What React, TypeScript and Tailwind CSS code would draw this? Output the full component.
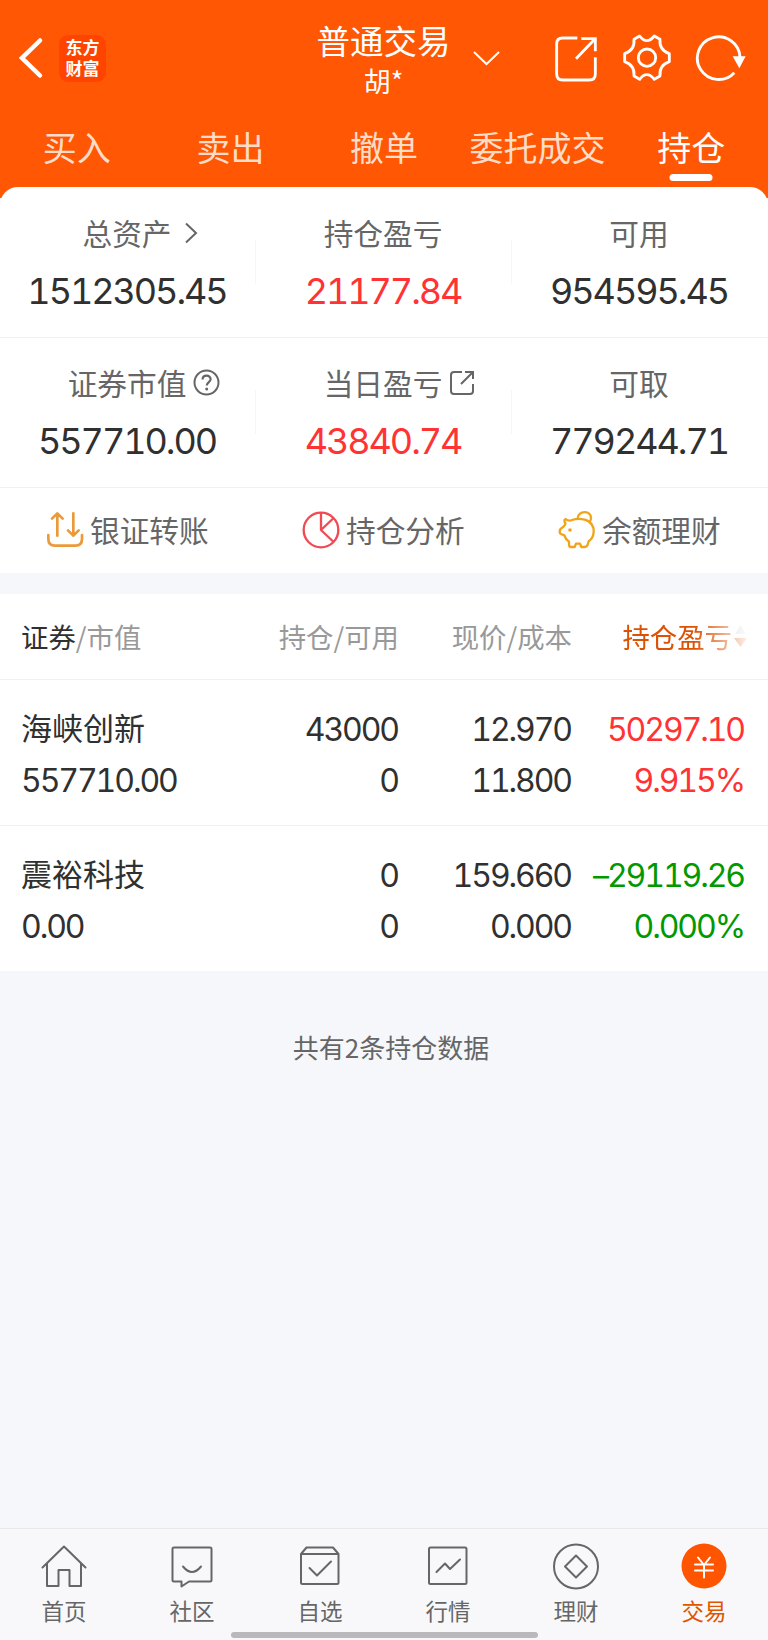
import React from 'react';
import clsx from 'clsx';

interface Holding {
  name: string;
  value: string;
  amount: string;
  available: string;
  price: string;
  cost: string;
  profit: string;
  percent: string;
  up: boolean;
}

const TABS = ['买入', '卖出', '撤单', '委托成交', '持仓'];

const HOLDINGS: Holding[] = [
  {
    name: '海峡创新',
    value: '557710.00',
    amount: '43000',
    available: '0',
    price: '12.970',
    cost: '11.800',
    profit: '50297.10',
    percent: '9.915%',
    up: true,
  },
  {
    name: '震裕科技',
    value: '0.00',
    amount: '0',
    available: '0',
    price: '159.660',
    cost: '0.000',
    profit: '–29119.26',
    percent: '0.000%',
    up: false,
  },
];

const Header: React.FC = () => (
  <header className="flex h-[112px] text-white">
    <div className="flex w-[300px] items-center pl-[18px] pt-[4px]">
      <svg width="26" height="42" viewBox="0 0 26 42" fill="none" stroke="currentColor" strokeWidth="4.500">
        <path d="M22 3.500L4 21l18 17.500" strokeLinecap="round" strokeLinejoin="miter" />
      </svg>
      <div className="ml-[15px] flex h-[47px] w-[47px] flex-col items-center justify-center rounded-[9px] bg-[#ff4400] pb-[2px] text-[17px] font-bold leading-[21px]">
        <span>东方</span>
        <span>财富</span>
      </div>
    </div>
    <div className="flex w-[168px] flex-col items-center pr-px pt-[19px]">
      <div className="text-[33.500px] leading-[42px]">普通交易</div>
      <div className="text-[27px] leading-[40px]">胡*</div>
    </div>
    <div className="flex flex-1 items-center pt-[4px]">
      <svg className="ml-[5px]" width="27" height="16" viewBox="0 0 27 16" fill="none" stroke="currentColor" strokeWidth="2">
        <path d="M1 2l12.500 12L26 2" />
      </svg>
      <svg className="ml-[54px]" width="44" height="48" viewBox="0 0 132 144" fill="none" stroke="currentColor" strokeWidth="8.500">
        <path d="M70 12H26Q8 12 8 30V120Q8 138 26 138H106Q124 138 124 120V70" />
        <path d="M82 14H124V52M122 16L66 74" />
      </svg>
      <svg className="ml-[25px]" width="48" height="48" viewBox="0 0 144 144" fill="none" stroke="currentColor" strokeWidth="8.500" strokeLinejoin="round">
        <path d="M50 6Q71 34 94 6L111 16Q108 48 139 59V83Q108 94 111 126L94 136Q71 108 50 136L33 126Q36 94 5 83V59Q36 48 33 16Z" />
        <circle cx="72" cy="71" r="26" />
      </svg>
      <svg className="ml-[24px]" width="52" height="48" viewBox="0 0 156 144" fill="none" stroke="currentColor" strokeWidth="8.500">
        <path d="M118 116A64 64 0 1 1 135 70" />
        <path d="M113 67H152L133 103Z" fill="currentColor" stroke="none" />
      </svg>
    </div>
  </header>
);

interface StatProps {
  label: string;
  value: string;
  red?: boolean;
  icon?: React.ReactNode;
  divider?: boolean;
}

const Stat: React.FC<StatProps> = ({ label, value, red, icon, divider }) => (
  <div className="relative flex flex-col items-center pr-[2px] pt-[26px]">
    <div className="relative flex h-[40px] items-center text-[29.700px] leading-[40px] text-[#666]">
      {label}
      {icon}
    </div>
    <div
      className={clsx(
        "mt-[18px] font-['Inter'] text-[36px] leading-[40px] font-[425] tracking-[-2.050px] tabular-nums",
        red ? 'text-[#ff3333]' : 'text-[#303030]'
      )}
    >
      {value}
    </div>
    {divider && <div className="absolute right-0 top-[53px] h-[44px] w-px bg-[#f6f6f7]" />}
  </div>
);

const Summary: React.FC = () => (
  <>
    <div className="grid h-[151px] grid-cols-3 border-b border-[#f0f0f0]">
      <Stat
        label="总资产"
        value="1512305.45"
        divider
        icon={
          <svg className="absolute left-[103px] top-[9px]" width="13" height="22" viewBox="0 0 13 22" fill="none" stroke="#666" strokeWidth="2">
            <path d="M1 1.500L11 11 1 20.500" />
          </svg>
        }
      />
      <Stat label="持仓盈亏" value="21177.84" red divider />
      <Stat label="可用" value="954595.45" />
    </div>
    <div className="-mt-px grid h-[151px] grid-cols-3 border-b border-[#f0f0f0]">
      <Stat
        label="证券市值"
        value="557710.00"
        divider
        icon={
          <svg className="absolute left-[125px] top-[6px]" width="27" height="27" viewBox="0 0 27 27" fill="none" stroke="#666" strokeWidth="2">
            <circle cx="13.500" cy="13.500" r="12" />
            <path d="M9.600 10.500C9.600 5.500 17.600 5.500 17.600 10.200C17.600 13 13.700 13.200 13.700 16.600" strokeWidth="2.200" />
            <circle cx="13.700" cy="20" r="1.500" fill="#666" stroke="none" />
          </svg>
        }
      />
      <Stat
        label="当日盈亏"
        value="43840.74"
        red
        divider
        icon={
          <svg className="absolute left-[125px] top-[7px]" width="26" height="26" viewBox="0 0 26 26" fill="none" stroke="#666" strokeWidth="2">
            <path d="M13 2H5Q2 2 2 5V21Q2 24 5 24H21Q24 24 24 21V14" />
            <path d="M16 2H24V9M23.500 2.500L12 14" />
          </svg>
        }
      />
      <Stat label="可取" value="779244.71" />
    </div>
  </>
);

const Actions: React.FC = () => (
  <div className="grid h-[85px] grid-cols-3 pb-[2px] text-[29.700px] text-[#666]">
    <div className="flex items-center pl-[46px]">
      <svg width="38" height="38" viewBox="0 0 114 114" fill="none" stroke="#eb9a3a" strokeWidth="8" strokeLinecap="round" strokeLinejoin="round">
        <path d="M7 72V84Q7 104 27 104H88Q108 104 108 84V72" />
        <path d="M34 74V8M18 23L34 7L50 23M82 7V74M66 58L82 74L98 58" />
      </svg>
      <span className="ml-[6px] pt-px">银证转账</span>
    </div>
    <div className="flex items-center pl-[46px]">
      <svg width="38" height="38" viewBox="0 0 114 114" fill="none" stroke="#f04a55" strokeWidth="7">
        <circle cx="57" cy="57" r="52" />
        <path d="M57 5V57L95 21M57 57L95 93" strokeLinejoin="round" />
      </svg>
      <span className="ml-[6px] pt-px">持仓分析</span>
    </div>
    <div className="flex items-center pl-[46px]">
      <svg width="38" height="38" viewBox="0 0 114 114" fill="none" stroke="#efa419" strokeWidth="7" strokeLinejoin="round">
        <path d="M23 24Q32 32 42 27Q60 21 80 26C99 31 109 47 107 64Q105 82 92 91L89 101Q86 108 78 108H70L66 98H54L50 108H39Q34 108 33 102V92Q22 84 19 73L9 69Q5 67 5 62Q5 54 12 50Q19 46 21 41Q24 38 20 33Q18 27 23 24Z" />
        <path d="M59 23C58 -2 101 -4 99 23Q98 30 93 34" />
        <circle cx="36" cy="57" r="5.500" fill="#efa419" stroke="none" />
      </svg>
      <span className="ml-[6px] pt-px">余额理财</span>
    </div>
  </div>
);

const HoldingTable: React.FC = () => (
  <section className="bg-white">
    <div className="grid h-[86px] grid-cols-[200px_178px_173px_175px] items-center border-b border-[#f0f0f0] pl-[21px] text-[27.400px] text-[#999]">
      <div>
        <span className="text-[#303030]">证券</span>/市值
      </div>
      <div className="text-right">持仓/可用</div>
      <div className="text-right">现价/成本</div>
      <div className="flex items-center justify-end text-[#dc5205] [mask-image:linear-gradient(to_right,#000_122px,transparent_180px)]">
        持仓盈亏
        <svg className="ml-[2px]" width="13" height="24" viewBox="0 0 13 24">
          <path d="M1 10L6.500 1L12 10Z" fill="#ccc" />
          <path d="M0 14L6.500 23L13 14Z" fill="currentColor" />
        </svg>
      </div>
    </div>
    {HOLDINGS.map((h, i) => (
      <div
        key={h.name}
        className={clsx(
          "grid grid-cols-[200px_177px_173px_173px] pl-[21px] pt-[24px] font-['Inter'] text-[32px] leading-[51px] font-[425] tracking-[-2.100px] text-[#303030] tabular-nums",
          i === 0 ? 'h-[146px] border-b border-[#f0f0f0]' : 'h-[145px]'
        )}
      >
        <div>
          <div className="-mt-[3px] mb-[3px] font-['Noto_Sans_CJK_SC'] text-[31px] font-normal leading-[51px] tracking-normal">{h.name}</div>
          <div>{h.value}</div>
        </div>
        <div className="text-right">
          <div>{h.amount}</div>
          <div>{h.available}</div>
        </div>
        <div className="text-right">
          <div>{h.price}</div>
          <div>{h.cost}</div>
        </div>
        <div className={clsx('text-right', h.up ? 'text-[#ff3333]' : 'text-[#009900]')}>
          <div>{h.profit}</div>
          <div>{h.percent}</div>
        </div>
      </div>
    ))}
  </section>
);

const NAV = [
  {
    label: '首页',
    icon: <path d="M2.500 24.500L24 3.500L45.500 24.500M7 21V43H18.500V27H29.500V43H41V21" />,
  },
  {
    label: '社区',
    icon: <path d="M6 4.500H42Q43.500 4.500 43.500 6V37Q43.500 38.500 42 38.500H21L13.500 43.500V38.500H6Q4.500 38.500 4.500 37V6Q4.500 4.500 6 4.500ZM15 23.500Q24 34.500 33 23.500" />,
  },
  {
    label: '自选',
    icon: <path d="M5 11L10.500 4.500H37L42.500 11V39.500Q42.500 41 41 41H6.500Q5 41 5 39.500V11H42.500M13.500 25L21 32.500L35 18.500" />,
  },
  {
    label: '行情',
    icon: <path d="M6.500 4.500H41Q42.500 4.500 42.500 6V39.500Q42.500 41 41 41H6.500Q5 41 5 39.500V6Q5 4.500 6.500 4.500ZM12.500 29L21 20.500L26 26L36 16.500" />,
  },
  {
    label: '理财',
    icon: (
      <>
        <circle cx="24" cy="23.500" r="22" />
        <path d="M24 12.500L35 23.500L24 34.500L13 23.500Z" />
      </>
    ),
  },
  {
    label: '交易',
    icon: (
      <>
        <circle cx="24" cy="23" r="22.500" fill="#ff5500" stroke="none" />
        <path d="M18 14.500L24 22L30 14.500M15 21.500H33M15 27.500H33M24 22V34.500" stroke="#fff" />
      </>
    ),
  },
];

const App: React.FC = () => {
  return (
    <div className="flex h-[1640px] w-[768px] flex-col overflow-hidden bg-[#f6f7fa] font-['Noto_Sans_CJK_SC',sans-serif]">
      <div className="h-[198px] shrink-0 bg-[#ff5703]">
        <Header />
        <nav className="grid grid-cols-5 text-center text-[34px] leading-[50px] text-[#ffdcc8]">
          {TABS.map((tab) => (
            <div key={tab} className={clsx('relative whitespace-nowrap pt-[10px]', tab === '持仓' && 'text-white')}>
              {tab}
              {tab === '持仓' && (
                <div className="absolute left-1/2 top-[62px] h-[7px] w-[43px] -translate-x-1/2 rounded-full bg-white" />
              )}
            </div>
          ))}
        </nav>
      </div>

      <section className="relative -mt-[11px] rounded-t-[18px] bg-white">
        <Summary />
        <Actions />
      </section>

      <div className="mt-[21px]">
        <HoldingTable />
      </div>

      <p className="mt-[56px] pl-[14px] text-center text-[26px] leading-[40px] text-[#666]">共有2条持仓数据</p>

      <footer className="mt-auto h-[112px] border-t border-[#e8e8ea] bg-[#f8f8fa]">
        <div className="grid h-[103px] grid-cols-6">
          {NAV.map((item) => (
            <div
              key={item.label}
              className={clsx(
                'flex flex-col items-center pt-[14px] text-[22.500px] leading-[30px]',
                item.label === '交易' ? 'text-[#e05500]' : 'text-[#666]'
              )}
            >
              <svg width="48" height="48" viewBox="0 0 48 48" fill="none" stroke="#666" strokeWidth="2" strokeLinejoin="round" strokeLinecap="round">
                {item.icon}
              </svg>
              <span className="mt-[4px]">{item.label}</span>
            </div>
          ))}
        </div>
        <div className="mx-auto h-[6px] w-[307px] rounded-full bg-[#b9b9bb]" />
      </footer>
    </div>
  );
};

export default App;
